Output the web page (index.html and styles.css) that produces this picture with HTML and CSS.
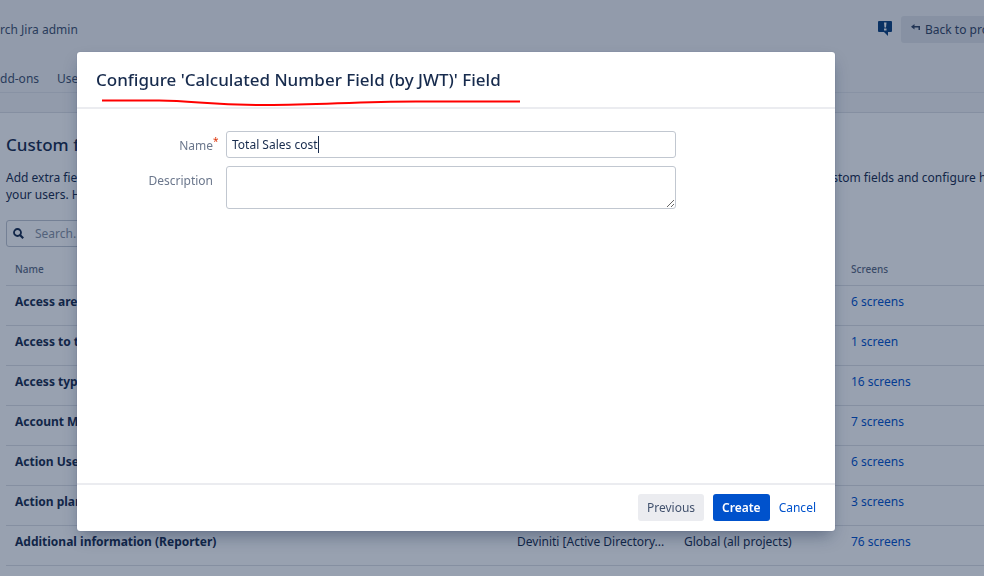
FILE: index.html
```html
<!DOCTYPE html>
<html lang="en">
<head>
    <meta charset="UTF-8">
    <meta name="viewport" content="width=device-width, initial-scale=1">
    <title>Custom fields</title>
    <link rel="stylesheet" href="styles.css">
</head>
<body>
<div class="page">
    <header class="admin-header">
        <div class="admin-top">
            <span class="admin-search">rch Jira admin</span>
            <div class="admin-actions">
                <svg class="feedback" width="15" height="16" viewBox="0 0 15 16">
                    <path d="M1 0h12a1 1 0 0 1 1 1v9a1 1 0 0 1-1 1h-3v4L6 11H1a1 1 0 0 1-1-1V1a1 1 0 0 1 1-1z" fill="#0b417d"/>
                    <path d="M6 1.500h2.500L8 6.500H6.500zM6 7.500h2.500v2H6z" fill="#fff"/>
                </svg>
                <button type="button" class="back-btn">
                    <svg width="10" height="8" viewBox="0 0 10 8">
                        <path d="M3.500 0v2H9v4H7.500V3.500h-4v2L0 2.800z" fill="#344563"/>
                    </svg>
                    Back to pro
                </button>
            </div>
        </div>
        <nav class="admin-nav">
            <a href="#">dd-ons</a>
            <a href="#">User</a>
        </nav>
    </header>
    <div class="strip"></div>
    <main class="content">
        <h2>Custom fields</h2>
        <div class="intro">
            <p>Add extra fields<br>your users. How</p>
            <p class="intro-end">custom fields and configure h</p>
        </div>
        <div class="filter">
            <svg width="11" height="11" viewBox="0 0 11 11">
                <circle cx="4.500" cy="4.500" r="3.500" fill="none" stroke="#172b4d" stroke-width="1.800"/>
                <path d="M7 7l3.200 3.200" stroke="#172b4d" stroke-width="2.200"/>
            </svg>
            <input type="text" placeholder="Search..." aria-label="Search">
        </div>
        <table class="fields">
            <colgroup>
                <col class="col-name">
                <col class="col-type">
                <col class="col-context">
                <col>
            </colgroup>
            <thead>
                <tr><th>Name</th><th></th><th></th><th>Screens</th></tr>
            </thead>
            <tbody>
                <tr><td>Access area</td><td></td><td></td><td><a href="#">6 screens</a></td></tr>
                <tr><td>Access to t</td><td></td><td></td><td><a href="#">1 screen</a></td></tr>
                <tr><td>Access type</td><td></td><td></td><td><a href="#">16 screens</a></td></tr>
                <tr><td>Account M</td><td></td><td></td><td><a href="#">7 screens</a></td></tr>
                <tr><td>Action User</td><td></td><td></td><td><a href="#">6 screens</a></td></tr>
                <tr><td>Action plan</td><td></td><td></td><td><a href="#">3 screens</a></td></tr>
                <tr>
                    <td>Additional information (Reporter)</td>
                    <td>Deviniti [Active Directory...</td>
                    <td>Global (all projects)</td>
                    <td><a href="#">76 screens</a></td>
                </tr>
            </tbody>
        </table>
    </main>
</div>

<div class="blanket">
    <section class="dialog" role="dialog" aria-labelledby="dialog-title">
        <header class="dialog-header">
            <h1 id="dialog-title">Configure 'Calculated Number Field (by JWT)' Field</h1>
            <svg class="underline" width="420" height="8" viewBox="0 0 420 8">
                <path d="M1 2.500H58C95 3 110 7 165 7C220 7 255 3.500 315 3.500H419" fill="none" stroke="#f00" stroke-width="2"/>
            </svg>
        </header>
        <form class="dialog-body">
            <div class="field">
                <label for="name">Name<span class="required">*</span></label>
                <div class="control">
                    <input id="name" type="text" value="Total Sales cost">
                    <span class="caret"></span>
                </div>
            </div>
            <div class="field">
                <label for="description">Description</label>
                <div class="control">
                    <textarea id="description"></textarea>
                </div>
            </div>
        </form>
        <footer class="dialog-footer">
            <button type="button" class="btn">Previous</button>
            <button type="button" class="btn primary">Create</button>
            <a href="#">Cancel</a>
        </footer>
    </section>
</div>
</body>
</html>
```
FILE: styles.css
```css
* {
    box-sizing: border-box;
}
body {
    margin: 0;
    overflow: hidden;
    background: #fff;
    color: #172b4d;
    font: 12px/17px "Noto Sans", sans-serif;
}
h1, h2, p {
    margin: 0;
}
a {
    color: #0052cc;
    text-decoration: none;
}
input, textarea, button {
    font: inherit;
    color: inherit;
}

/* admin page */
.page {
    height: 100vh;
    overflow: hidden;
    white-space: nowrap;
}
.admin-header {
    background: #f4f5f7;
    border-bottom: 1px solid #e4e6eb;
}
.admin-top {
    display: flex;
    justify-content: space-between;
    align-items: center;
    height: 59px;
}
.admin-search {
    color: #42526e;
}
.admin-actions {
    display: flex;
    gap: 8px;
    width: 106px;
}
.feedback {
    flex: none;
    margin-top: 5px;
}
.back-btn {
    display: flex;
    flex: none;
    gap: 4px;
    height: 27px;
    padding: 5px 10px;
    border: 0;
    border-radius: 3px;
    background: #e2e4e9;
    color: #344563;
}
.back-btn svg {
    margin-top: 3px;
}
.admin-nav {
    display: flex;
    gap: 18px;
    height: 33px;
    padding-top: 11px;
}
.admin-nav a {
    color: #42526e;
}
.strip {
    height: 20px;
    background: #f4f5f7;
    border-bottom: 1px solid #dfe1e6;
}
.content {
    padding: 20px 0 0 6px;
}
.content h2 {
    font-size: 17px;
    font-weight: 500;
    line-height: 24px;
}
.intro {
    display: flex;
    justify-content: space-between;
    margin-top: 12px;
}
.intro-end {
    width: 165px;
}
.filter {
    display: flex;
    align-items: center;
    gap: 9px;
    width: 200px;
    height: 27px;
    margin-top: 17px;
    padding: 0 6px;
    border: 1px solid #c1c7d0;
    border-radius: 3px;
}
.filter input {
    flex: 1;
    min-width: 0;
    border: 0;
    background: none;
}
.filter input::placeholder {
    color: #8993a4;
}
.fields {
    width: 100%;
    margin-top: 8px;
    table-layout: fixed;
    border-collapse: collapse;
}
.fields th, .fields td {
    height: 40px;
    padding: 0 9px 7px;
    border-bottom: 1px solid #dfe1e6;
    text-align: left;
}
.fields th {
    height: 30px;
    padding-bottom: 0;
    color: #5e6c84;
    font-size: 10px;
    font-weight: 500;
}
.fields td:first-child {
    font-weight: 700;
}
.col-name {
    width: 502px;
}
.col-type, .col-context {
    width: 167px;
}

/* dialog */
.blanket {
    position: fixed;
    inset: 0;
    padding: 52px 149px 45px 77px;
    background: rgba(9, 30, 66, .42);
}
.dialog {
    display: flex;
    flex-direction: column;
    height: 100%;
    border-radius: 3px;
    background: #fff;
    box-shadow: 0 0 1px rgba(9, 30, 66, .31), 0 8px 16px -4px rgba(9, 30, 66, .4);
}
.dialog-header {
    position: relative;
    padding: 15px 19px;
    border-bottom: 2px solid #ebecf0;
}
.dialog-header h1 {
    font-size: 17px;
    font-weight: 500;
    line-height: 25px;
}
.underline {
    position: absolute;
    left: 24px;
    top: 46px;
}
.dialog-body {
    flex: 1;
    padding: 22px 19px;
}
.field {
    display: flex;
    margin-bottom: 8px;
}
.field label {
    position: relative;
    width: 117px;
    margin-right: 13px;
    padding-top: 6px;
    color: #6b778c;
    text-align: right;
}
.required {
    position: absolute;
    top: 2px;
    color: #de350b;
    font-size: 10px;
}
.control {
    position: relative;
    width: 450px;
}
.control input, .control textarea {
    display: block;
    width: 100%;
    height: 27px;
    padding: 4px 5px;
    border: 1px solid #c1c7d0;
    border-radius: 3px;
    background: #fff;
}
.control textarea {
    height: 43px;
}
.caret {
    position: absolute;
    left: 92px;
    top: 5px;
    width: 1px;
    height: 17px;
    background: #172b4d;
}
.dialog-footer {
    display: flex;
    justify-content: flex-end;
    align-items: center;
    gap: 9px;
    height: 48px;
    padding: 0 19px 2px;
    border-top: 2px solid #ebecf0;
}
.btn {
    height: 27px;
    padding: 0 9px;
    border: 0;
    border-radius: 3px;
    background: #ebecf0;
    color: #42526e;
}
.btn.primary {
    background: #0052cc;
    color: #fff;
    font-weight: 600;
}
```
